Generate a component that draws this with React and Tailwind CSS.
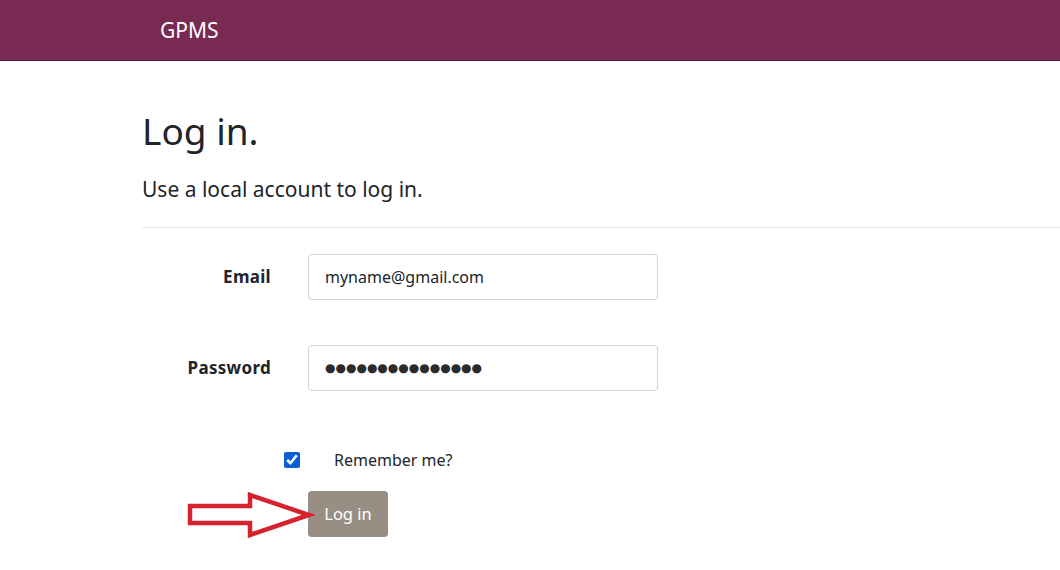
import React, { useState } from 'react'

function ArrowMark() {
  return (
    <svg className="absolute left-[186px] top-[490px]" width="130" height="50" viewBox="0 0 130 50" fill="none">
      <path
        d="M4 16 L64 16 L64 5 L123 25 L64 45 L64 33 L4 33 Z"
        stroke="#d6222e"
        strokeWidth="4.5"
        strokeLinejoin="miter"
        fill="none"
      />
    </svg>
  )
}

const PASSWORD_MASK = '\u25CF'.repeat(15)

export default function App() {
  const [remember, setRemember] = useState(true)

  return (
    <div className="relative min-h-[570px] bg-white text-[#212529]" style={{ fontFamily: 'Tahoma, "Noto Sans", "DejaVu Sans", sans-serif' }}>
      <nav className="h-[61px] bg-[#782a52] border-b border-[#5a1c3b] flex items-center pl-[160px]">
        <span className="text-white text-[21px] leading-none">GPMS</span>
      </nav>

      <main className="pl-[142px]">
        <h1 className="mt-[46px] text-[37px] leading-[48px] text-[#212529]">Log in.</h1>
        <h2 className="mt-[20px] text-[21px] leading-[28px]">Use a local account to log in.</h2>
        <hr className="mt-[24px] border-t border-[#e5e5e5]" />

        <form className="mt-[26px] flex flex-col" onSubmit={e => e.preventDefault()}>
          <div className="flex items-center">
            <label className="w-[129px] text-right font-bold text-[17px] tracking-[0.3px]">Email</label>
            <input
              type="email"
              defaultValue="myname@gmail.com"
              className="ml-[37px] w-[350px] h-[46px] px-[16px] text-[16px] border border-[#ced4da] rounded-[4px] outline-none"
            />
          </div>
          <div className="flex items-center mt-[45px]">
            <label className="w-[129px] text-right font-bold text-[17px] tracking-[0.3px]">Password</label>
            <input
              type="text"
              readOnly
              aria-label="Password"
              value={PASSWORD_MASK}
              className="ml-[37px] w-[350px] h-[46px] px-[16px] text-[12px] text-[#2b2b2b] border border-[#ced4da] rounded-[4px] outline-none"
              style={{ fontFamily: '"DejaVu Sans", sans-serif' }}
            />
          </div>
          <div className="flex items-center mt-[57px] pl-[142px]">
            <input
              type="checkbox"
              checked={remember}
              onChange={e => setRemember(e.target.checked)}
              className="w-[16px] h-[16px] accent-[#0b5ed7]"
            />
            <span className="ml-[34px] text-[16px]">Remember me?</span>
          </div>
          <div className="mt-[19px] pl-[166px]">
            <button
              type="submit"
              className="h-[46px] w-[80px] rounded-[4px] bg-[#998e83] text-white text-[16.5px]"
            >
              Log in
            </button>
          </div>
        </form>
      </main>

      <ArrowMark />
    </div>
  )
}
